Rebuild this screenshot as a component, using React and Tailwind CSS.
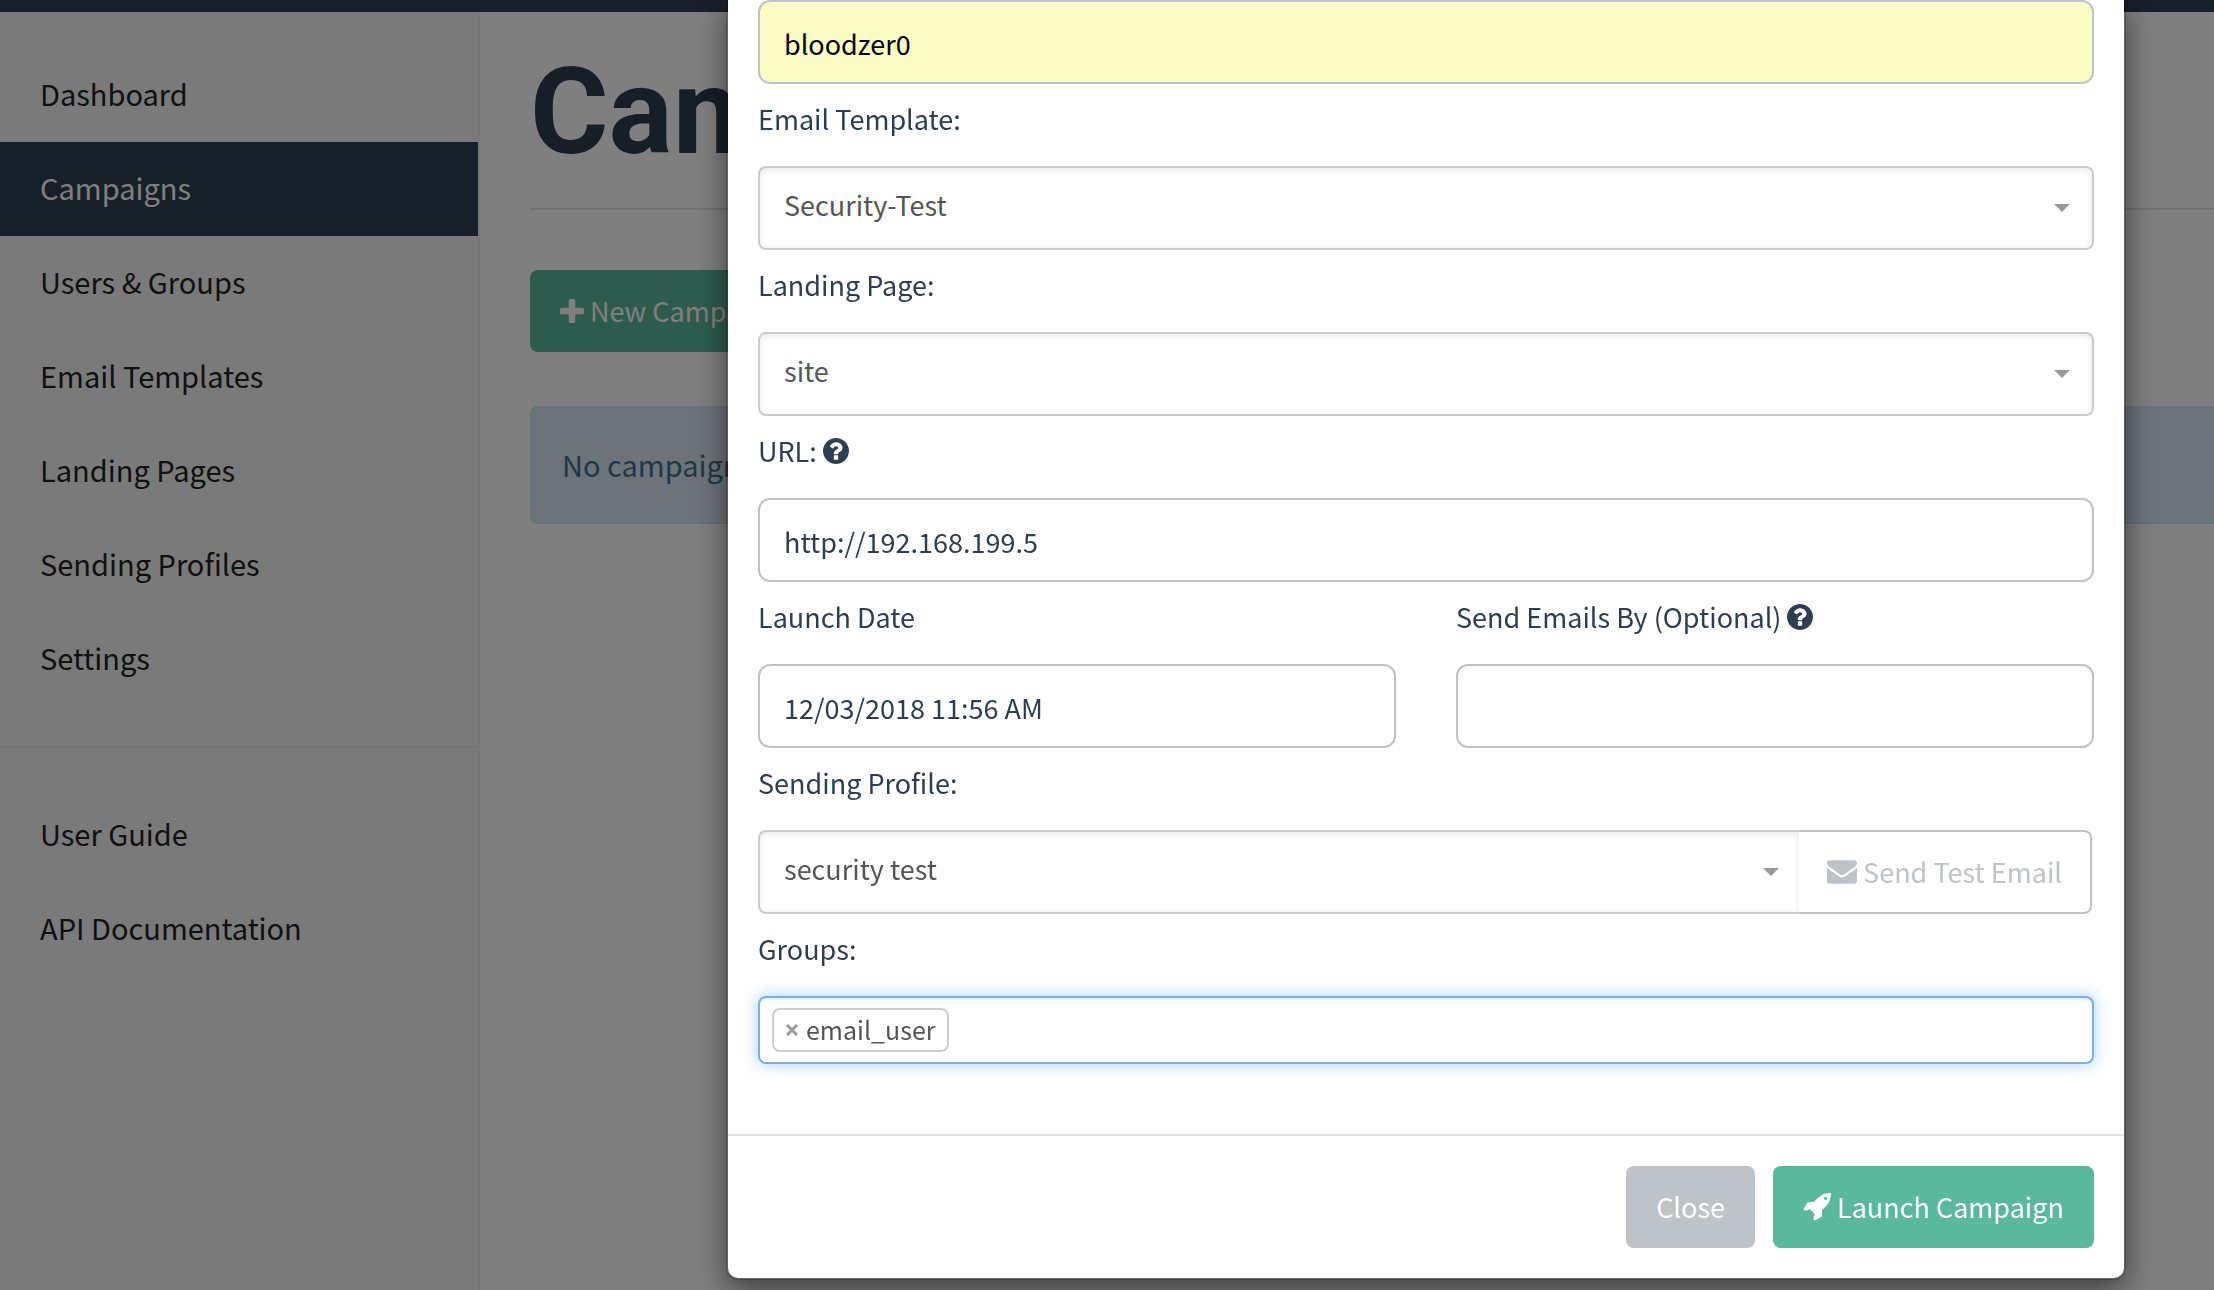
import React from "react";

const PLUS =
  "M1600 736v192q0 40-28 68t-68 28h-416v416q0 40-28 68t-68 28h-192q-40 0-68-28t-28-68v-416h-416q-40 0-68-28t-28-68v-192q0-40 28-68t68-28h416v-416q0-40 28-68t68-28h192q40 0 68 28t28 68v416h416q40 0 68 28t28 68z";
const QUESTION =
  "M1024 1376v-192q0-14-9-23t-23-9h-192q-14 0-23 9t-9 23v192q0 14 9 23t23 9h192q14 0 23-9t9-23zm256-672q0-88-55.5-163t-138.5-116-170-41q-243 0-371 213-15 24 8 42l132 100q7 6 19 6 16 0 25-12 53-68 86-92 34-24 86-24 48 0 85.5 26t37.5 59q0 38-20 61t-68 45q-63 28-115.5 86.5t-52.5 125.5v36q0 14 9 23t23 9h192q14 0 23-9t9-23q0-19 21.5-49.5t54.5-49.5q32-18 49-28.5t46-35 44.5-48 28-60.5 12.5-81zm384 192q0 209-103 385.5t-279.5 279.5-385.5 103-385.5-103-279.5-279.5-103-385.5 103-385.5 279.5-279.5 385.5-103 385.5 103 279.5 279.5 103 385.5z";
const ENVELOPE =
  "M1792 710v794q0 66-47 113t-113 47h-1472q-66 0-113-47t-47-113v-794q44 49 101 87 362 246 497 345 57 42 92.5 65.5t94.5 48 110 24.5h2q51 0 110-24.5t94.5-48 92.5-65.5q170-123 498-345 57-39 100-87zm0-294q0 79-49 151t-122 123q-376 261-468 325-10 7-42.5 31t-54 38.5-52 32.5-57.5 27-50 9h-2q-23 0-50-9t-57.5-27-52-32.5-54-38.5-42.5-31q-91-64-262-182.5t-205-142.5q-62-42-117-115.5t-55-136.5q0-78 41.5-130t118.5-52h1472q65 0 112.5 47t47.5 113z";
const ROCKET =
  "M1440 448q0-40-28-68t-68-28-68 28-28 68 28 68 68 28 68-28 28-68zm224-288q0 249-75.5 430.5t-253.5 360.5q-81 80-195 176l-20 379q-2 16-16 26l-384 224q-7 4-16 4-12 0-23-9l-64-64q-13-14-8-32l85-276-281-281-276 85q-3 1-9 1-14 0-23-9l-64-64q-17-19-5-39l224-384q10-14 26-16l379-20q96-114 176-195 188-187 358-258t431-71q14 0 24 9.5t10 22.5z";

function Icon({ path, box, className }) {
  return (
    <svg viewBox={box} fill="currentColor" aria-hidden="true" className={className}>
      <path d={path} />
    </svg>
  );
}

const mainLinks = [
  "Dashboard",
  "Campaigns",
  "Users & Groups",
  "Email Templates",
  "Landing Pages",
  "Sending Profiles",
  "Settings",
];
const helpLinks = ["User Guide", "API Documentation"];

function NavLink({ label, active }) {
  return (
    <li>
      <a
        href="#"
        aria-current={active ? "page" : undefined}
        className={
          active
            ? "block bg-[#2f3e50] px-10 pt-6 pb-7 leading-[42px] text-white"
            : "block px-10 pt-6 pb-7 leading-[42px] text-[#222222]"
        }
      >
        {label}
      </a>
    </li>
  );
}

function Label({ htmlFor, help, children }) {
  return (
    <label htmlFor={htmlFor} className="flex h-[82px] items-start gap-[6px] pt-[14px] leading-[42px]">
      {children}
      {help && <Icon path={QUESTION} box="128 128 1536 1536" className="mt-2 size-[26px]" />}
    </label>
  );
}

const inputClass =
  "block h-[84px] w-full rounded-xl border-2 border-[#bdc3c7] bg-white px-6 pt-0.5 text-[#2c3e50] outline-none";

function Select({ id, value, joined }) {
  return (
    <div className="relative flex-1">
      <select
        id={id}
        defaultValue={value}
        className={
          joined
            ? "block h-[84px] w-full appearance-none rounded-l-lg border-2 border-r-0 border-[#cccccc] bg-white px-6 pb-1.5 text-[#555555] shadow-[inset_0_2px_6px_rgba(0,0,0,0.09)] outline-none"
            : "block h-[84px] w-full appearance-none rounded-lg border-2 border-[#cccccc] bg-white px-6 pb-1.5 text-[#555555] shadow-[inset_0_2px_6px_rgba(0,0,0,0.09)] outline-none"
        }
      >
        <option>{value}</option>
      </select>
      <svg
        viewBox="0 0 16 8"
        aria-hidden="true"
        className={
          joined
            ? "pointer-events-none absolute top-[38px] right-5 h-2 w-4"
            : "pointer-events-none absolute top-[38px] right-6 h-2 w-4"
        }
      >
        <path d="M0 0h16l-8 8z" fill="#999999" />
      </svg>
    </div>
  );
}

export default function App() {
  return (
    <div className="relative h-screen overflow-hidden bg-white font-['Noto_Sans_CJK_SC','Noto_Sans',sans-serif] text-[27px] text-[#2c3e50]">
      <header className="h-3 bg-[#2f3e50]" />
      <div className="flex h-full">
        <nav className="w-[480px] shrink-0 border-r-2 border-[#eeeeee] bg-[#f5f5f5] pt-9 text-[29px]">
          <ul>
            {mainLinks.map((l) => (
              <NavLink key={l} label={l} active={l === "Campaigns"} />
            ))}
          </ul>
          <hr className="my-10 border-t-2 border-[#ececec]" />
          <ul>
            {helpLinks.map((l) => (
              <NavLink key={l} label={l} />
            ))}
          </ul>
        </nav>
        <main className="min-w-0 flex-1 pl-[50px]">
          <h1 className="border-b-2 border-[#e4e4e4] pt-[34px] pb-[30px] font-[Roboto,sans-serif] text-[120px] leading-[132px] font-bold">
            Campaigns
          </h1>
          <button
            type="button"
            className="mt-[60px] flex h-[82px] items-center gap-[6px] rounded-lg bg-[#5ab89d] px-[30px] text-white"
          >
            <Icon path={PLUS} box="192 128 1408 1408" className="size-6" />
            New Campaign
          </button>
          <div className="mt-[54px] flex h-[118px] items-center rounded-l-lg border-2 border-r-0 border-[#c3e8ec] bg-[#d9e8f5] px-[30px] text-[29px] text-[#3f7090]">
            No campaigns created yet. Let's create one!
          </div>
        </main>
      </div>

      <div className="fixed inset-0 bg-black/50 pr-[88px] pl-[726px]">
        <div
          role="dialog"
          aria-label="New Campaign"
          className="rounded-b-xl border-2 border-t-0 border-black/20 bg-white bg-clip-padding shadow-[0_10px_30px_rgba(0,0,0,0.5)]"
        >
          <form className="px-[30px] pb-[70px]">
            <input
              id="name"
              aria-label="Name"
              defaultValue="bloodzer0"
              className="block h-[84px] w-full rounded-xl border-2 border-[#bdc3c7] bg-[#fafdc4] px-6 pt-0.5 text-black outline-none"
            />
            <Label htmlFor="template">Email Template:</Label>
            <Select id="template" value="Security-Test" />
            <Label htmlFor="page">Landing Page:</Label>
            <Select id="page" value="site" />
            <Label htmlFor="url" help>
              URL:
            </Label>
            <input id="url" defaultValue="http://192.168.199.5" className={inputClass} />
            <div className="grid grid-cols-2 gap-[60px]">
              <div>
                <Label htmlFor="launch">Launch Date</Label>
                <input id="launch" defaultValue="12/03/2018 11:56 AM" className={inputClass} />
              </div>
              <div>
                <Label htmlFor="sendby" help>
                  Send Emails By (Optional)
                </Label>
                <input id="sendby" className={inputClass} />
              </div>
            </div>
            <Label htmlFor="profile">Sending Profile:</Label>
            <div className="flex pr-[2px]">
              <Select id="profile" value="security test" joined />
              <button
                type="button"
                className="flex h-[84px] items-center gap-[6px] rounded-r-lg border-2 border-l-0 border-[#bdc3c7] bg-white px-7 text-[#bdc3c7]"
              >
                <Icon path={ENVELOPE} box="0 256 1792 1408" className="h-6 w-[30px]" />
                Send Test Email
              </button>
            </div>
            <Label htmlFor="groups">Groups:</Label>
            <div className="flex h-[68px] items-center rounded-lg border-2 border-[#75b0eb] bg-white px-3 shadow-[inset_0_2px_2px_rgba(0,0,0,0.075),0_0_16px_rgba(102,175,233,0.6)]">
              <span className="flex h-11 items-center gap-2 rounded-lg border-2 border-[#cccccc] px-3 text-[25px] text-[#555555]">
                <button type="button" aria-label="Remove email_user" className="flex">
                  <svg viewBox="0 0 12 12" className="size-3">
                    <path d="M1 1l10 10M11 1L1 11" stroke="#999999" strokeWidth="3" />
                  </svg>
                </button>
                email_user
              </span>
              <input id="groups" className="min-w-0 flex-1 bg-transparent outline-none" />
            </div>
          </form>
          <footer className="flex justify-end gap-[18px] border-t-2 border-[#e5e5e5] p-[30px]">
            <button type="button" className="h-[82px] rounded-lg bg-[#bdc3c7] px-[30px] text-white">
              Close
            </button>
            <button
              type="button"
              className="flex h-[82px] items-center gap-[6px] rounded-lg bg-[#5ab89d] px-[30px] text-white"
            >
              <Icon path={ROCKET} box="0 128 1664 1664" className="size-7" />
              Launch Campaign
            </button>
          </footer>
        </div>
      </div>
    </div>
  );
}
